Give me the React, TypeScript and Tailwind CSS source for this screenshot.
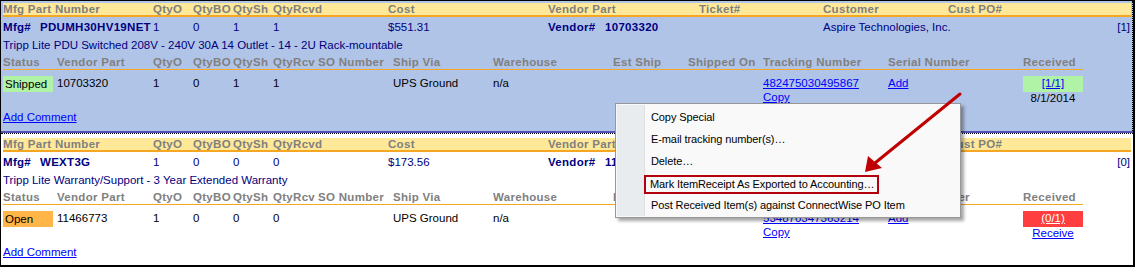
const items = [
  {
    mfg: "PDUMH30HV19NET",
    qty: ["1", "0", "1", "1"],
    cost: "$551.31",
    vendor: "10703320",
    customer: "Aspire Technologies, Inc.",
    count: "[1]",
    desc: "Tripp Lite PDU Switched 208V - 240V 30A 14 Outlet - 14 - 2U Rack-mountable",
    status: "Shipped",
    statusCls: "bg-[#b0f2a6]",
    vendorPart: "10703320",
    tracking: "482475030495867",
    received: "[1/1]",
    receivedCls: "bg-[#b0f2a6] text-[#0000ff]",
    below: "8/1/2014",
    belowLink: false,
  },
  {
    mfg: "WEXT3G",
    qty: ["1", "0", "0", "0"],
    cost: "$173.56",
    vendor: "11466773",
    customer: "Aspire Technologies, Inc.",
    count: "[0]",
    desc: "Tripp Lite Warranty/Support - 3 Year Extended Warranty",
    status: "Open",
    statusCls: "bg-[#ffb547]",
    vendorPart: "11466773",
    tracking: "534870347363214",
    received: "(0/1)",
    receivedCls: "bg-[#ff3f3f] text-white",
    below: "Receive",
    belowLink: true,
  },
];

const subCols = [
  { label: "Status", w: "w-[54px]" },
  { label: "Vendor Part", w: "w-[96px]" },
  { label: "QtyO", w: "w-[40px]" },
  { label: "QtyBO", w: "w-[40px]" },
  { label: "QtySh", w: "w-[40px]" },
  { label: "QtyRcv", w: "w-[45px]" },
  { label: "SO Number", w: "w-[75px]" },
  { label: "Ship Via", w: "w-[100px]" },
  { label: "Warehouse", w: "w-[120px]" },
  { label: "Est Ship", w: "w-[75px]" },
  { label: "Shipped On", w: "w-[75px]" },
  { label: "Tracking Number", w: "w-[125px]" },
  { label: "Serial Number", w: "w-[135px]" },
  { label: "Received", w: "w-[60px]" },
];

function Link({ children }: { children: React.ReactNode }) {
  return <span className="text-[#0000ff] underline">{children}</span>;
}

function Section({ item, selected }: { item: (typeof items)[number]; selected: boolean }) {
  return (
    <div
      className={
        selected
          ? "bg-[#b0c4e8] pt-[2px] pl-[2px] pb-[7px] border-r border-dotted border-black"
          : "bg-white pt-[4px] pl-[2px] pb-[6px]"
      }
    >
      {/* line header */}
      <div className="flex h-[14px] w-[1128px] items-center overflow-hidden whitespace-nowrap border-b-2 border-[#f5a623] bg-[#ffe998] font-bold leading-[12px] tracking-[0.3px] text-[#808080]">
        <span className="w-[150px]">Mfg Part Number</span>
        <span className="w-[40px]">QtyO</span>
        <span className="w-[40px]">QtyBO</span>
        <span className="w-[40px]">QtySh</span>
        <span className="w-[115px]">QtyRcvd</span>
        <span className="w-[160px]">Cost</span>
        <span className="w-[151px]">Vendor Part</span>
        <span className="w-[124px]">Ticket#</span>
        <span className="w-[125px]">Customer</span>
        <span>Cust PO#</span>
      </div>

      <div className="flex h-[22px] w-[1128px] items-center whitespace-nowrap text-[#000080]">
        <span className="flex w-[150px] overflow-hidden font-bold tracking-[0.3px]">
          <span className="w-[37px] shrink-0">Mfg#</span>
          <span>{item.mfg}</span>
        </span>
        <span className="w-[40px]">{item.qty[0]}</span>
        <span className="w-[40px]">{item.qty[1]}</span>
        <span className="w-[40px]">{item.qty[2]}</span>
        <span className="w-[115px]">{item.qty[3]}</span>
        <span className="w-[160px]">{item.cost}</span>
        <span className="flex w-[275px] font-bold tracking-[0.3px]">
          <span className="w-[57px] shrink-0">Vendor#</span>
          <span>{item.vendor}</span>
        </span>
        <span className="flex-1">{item.customer}</span>
        <span className="pr-[1px]">{item.count}</span>
      </div>

      <div className="flex h-[13px] items-center whitespace-nowrap text-[#000080]">{item.desc}</div>

      {/* receipt header */}
      <div className="flex h-[18px] w-[1080px] items-end whitespace-nowrap border-b border-[#f5a623] pb-[1px] font-bold leading-[12px] tracking-[0.3px] text-[#808080]">
        {subCols.map((c) => (
          <span key={c.label} className={`${c.w} overflow-hidden`}>
            {c.label}
          </span>
        ))}
      </div>

      <div className="mt-[6px] flex h-[28px] items-start whitespace-nowrap text-black">
        <div className="w-[54px]">
          <div className={`flex h-[16px] w-[50px] items-center pl-[2px] pt-[1px] ${item.statusCls}`}>{item.status}</div>
        </div>
        <span className="w-[96px] pt-[1px] leading-[12px]">{item.vendorPart}</span>
        <span className="w-[40px] pt-[1px] leading-[12px]">{item.qty[0]}</span>
        <span className="w-[40px] pt-[1px] leading-[12px]">{item.qty[1]}</span>
        <span className="w-[40px] pt-[1px] leading-[12px]">{item.qty[2]}</span>
        <span className="w-[45px] pt-[1px] leading-[12px]">{item.qty[3]}</span>
        <span className="w-[75px]" />
        <span className="w-[100px] pt-[1px] leading-[12px]">UPS Ground</span>
        <span className="w-[120px] pt-[1px] leading-[12px]">n/a</span>
        <span className="w-[75px]" />
        <span className="w-[75px]" />
        <div className="flex w-[125px] flex-col leading-[14px]">
          <Link>{item.tracking}</Link>
          <span>
            <Link>Copy</Link>
          </span>
        </div>
        <span className="w-[135px] leading-[14px]">
          <Link>Add</Link>
        </span>
        <div className="flex w-[60px] flex-col items-center">
          <div className={`flex h-[16px] w-full items-center justify-center underline ${item.receivedCls}`}>{item.received}</div>
          <span className="leading-[12px]">{item.belowLink ? <Link>{item.below}</Link> : item.below}</span>
        </div>
      </div>

      <div className="mt-[7px] leading-[13px]">
        <Link>Add Comment</Link>
      </div>
    </div>
  );
}

const menu = [
  "Copy Special",
  "E-mail tracking number(s)…",
  "Delete…",
  "Mark ItemReceipt As Exported to Accounting…",
  "Post Received Item(s) against ConnectWise PO Item",
];

export default function App() {
  return (
    <div className="relative h-[267px] w-[1135px] overflow-hidden border-t border-l border-r-2 border-b-2 border-black bg-white font-['Liberation_Sans',Arial,sans-serif] text-[11.5px]">
      <Section item={items[0]} selected />
      <div className="h-[2px] bg-[#5252b8]" />
      <div className="border-t border-dotted border-black" />
      <Section item={items[1]} selected={false} />

      {/* context menu */}
      <div className="absolute left-[614px] top-[102px] w-[346px] border border-[#979797] bg-[#f9f9f9] pt-[2px] pb-[1px] font-['Liberation_Sans',Arial,sans-serif] text-[11px] tracking-[-0.1px] text-black shadow-[3px_3px_3px_rgba(0,0,0,0.35)]">
        <div className="absolute top-[1px] bottom-[1px] left-[1px] w-[28px] border-r border-[#e0e0e0] bg-[#e9ecee]" />
        {menu.map((m, i) =>
          i === 3 ? (
            <div key={m} className="relative flex h-[22px] items-end pl-[28px]">
              <span className="flex h-[19px] w-[235px] items-center border-2 border-[#b3000c] pl-[4px] whitespace-nowrap">{m}</span>
            </div>
          ) : (
            <div key={m} className="relative flex h-[22px] items-center pl-[35px] whitespace-nowrap">
              {m}
            </div>
          )
        )}
      </div>

      {/* annotation arrow */}
      <svg className="absolute left-[854px] top-[87px]" width="112" height="92" viewBox="0 0 112 92">
        <line x1="105" y1="6" x2="20" y2="75" stroke="#c00000" strokeWidth="3" strokeLinecap="round" />
        <polygon points="10,84 13,68 27,80" fill="#c00000" />
      </svg>
    </div>
  );
}
